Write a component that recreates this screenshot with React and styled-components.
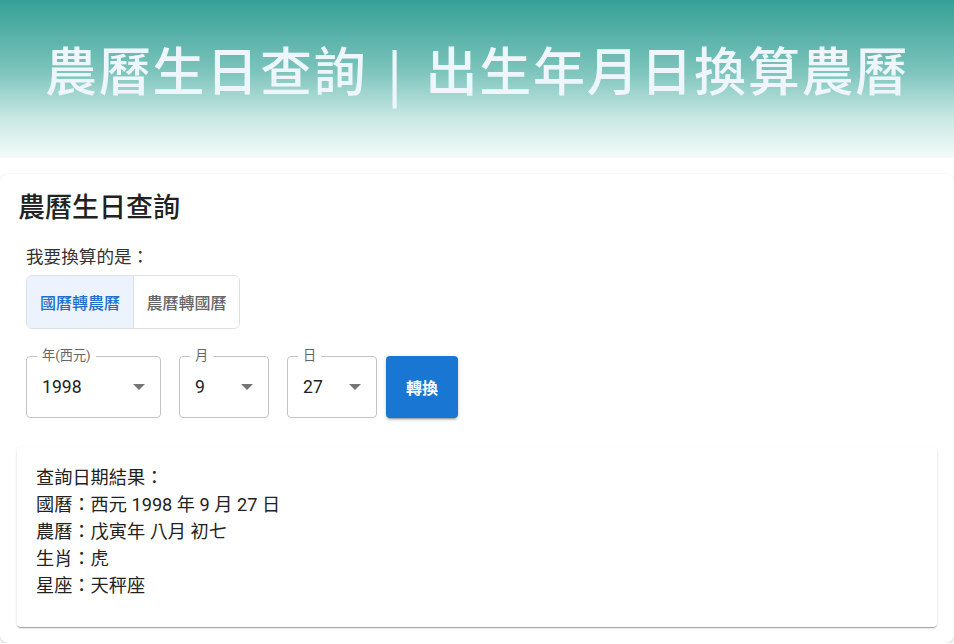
import React, { useState } from "react";
import styled, { createGlobalStyle } from "styled-components";

const Global = createGlobalStyle`
  html, body { margin: 0; padding: 0; background: #ffffff; }
  body {
    font-family: Roboto, "Noto Sans CJK TC", "Noto Sans", sans-serif;
    color: #222;
  }
  * { box-sizing: border-box; }
`;

const Header = styled.header`
  height: 158px;
  background: linear-gradient(to bottom, #35a096 0%, #7cc4bc 45%, #c9e8e4 75%, #f4fbfa 100%);
  display: flex;
  align-items: center;
  justify-content: center;
  padding-bottom: 20px;
`;

const HeaderTitle = styled.h1`
  margin: 0;
  font-family: "Noto Sans CJK TC", sans-serif;
  font-size: 52px;
  font-weight: 500;
  letter-spacing: 1.7px;
  color: #eef6fc;
  line-height: 1.2;
  white-space: pre;
`;

const Sep = styled.span`
  display: inline-block;
  padding: 0 22px 0 20px;
  font-family: "Noto Sans CJK TC", sans-serif;
  font-weight: 500;
  transform: translateY(3px);
`;

const Card = styled.main`
  margin-top: 16px;
  background: #fff;
  border-radius: 8px;
  box-shadow: 0 1px 3px rgba(0,0,0,0.18), 0 1px 1px rgba(0,0,0,0.06);
  padding: 12px 17px 16px;
`;

const Title = styled.h2`
  margin: 0 0 0 1px;
  font-size: 27px;
  font-weight: 500;
  line-height: 40px;
  color: #222;
  font-family: "Noto Sans CJK TC", sans-serif;
`;

const Form = styled.section`
  padding: 17px 9px 0;
  display: flex;
  flex-direction: column;
`;

const Prompt = styled.div`
  font-size: 17.6px;
  line-height: 26px;
  color: #333;
  font-family: "Noto Sans CJK TC", sans-serif;
`;

const ToggleGroup = styled.div`
  margin-top: 6px;
  display: inline-flex;
  align-self: flex-start;
  border: 1px solid #dcdfe4;
  border-radius: 6px;
  overflow: hidden;
  height: 54px;
`;

const ToggleButton = styled.button`
  width: ${(p) => p.$w}px;
  border: none;
  border-left: ${(p) => (p.$first ? "none" : "1px solid #dcdfe4")};
  background: ${(p) => (p.$active ? "#edf3fc" : "#fff")};
  color: ${(p) => (p.$active ? "#1f6fcb" : "#666")};
  font-family: "Noto Sans CJK TC", sans-serif;
  font-size: 16px;
  font-weight: 500;
  cursor: pointer;
  padding: 0;
`;

const FieldRow = styled.div`
  margin-top: 27px;
  display: flex;
  align-items: stretch;
  gap: 18px;
`;

const SelectBox = styled.div`
  position: relative;
  width: ${(p) => p.$w}px;
  height: 62px;
  border: 1px solid #c4c4c4;
  border-radius: 4px;
  display: flex;
  align-items: center;
  padding: 0 15px 0 15px;
  justify-content: space-between;
`;

const Legend = styled.span`
  position: absolute;
  top: -10px;
  left: 10px;
  padding: 0 5px;
  background: #fff;
  font-size: 13.2px;
  line-height: 18px;
  color: #666;
  font-family: Roboto, "Noto Sans CJK TC", sans-serif;
`;

const Value = styled.span`
  font-size: 17.6px;
  color: #222;
  font-family: Roboto, sans-serif;
`;

const Arrow = styled.span`
  width: 0;
  height: 0;
  border-left: 6px solid transparent;
  border-right: 6px solid transparent;
  border-top: 6px solid #757575;
`;

const ConvertButton = styled.button`
  margin-left: -9px;
  width: 72px;
  height: 62px;
  border: none;
  border-radius: 4px;
  background: #1976d2;
  color: #fff;
  font-family: "Noto Sans CJK TC", sans-serif;
  font-size: 16px;
  font-weight: 600;
  box-shadow: 0 3px 1px -2px rgba(0,0,0,0.2), 0 2px 2px 0 rgba(0,0,0,0.14), 0 1px 5px 0 rgba(0,0,0,0.12);
  cursor: pointer;
`;

const Result = styled.section`
  margin-top: 29px;
  background: #fff;
  border-radius: 4px;
  box-shadow: 0 2px 1px -1px rgba(0,0,0,0.2), 0 1px 1px 0 rgba(0,0,0,0.14), 0 1px 3px 0 rgba(0,0,0,0.12);
  padding: 17px 19px 28px;
`;

const ResultLine = styled.div`
  font-size: 18.2px;
  line-height: 27px;
  color: #222;
  font-family: Roboto, "Noto Sans CJK TC", sans-serif;
`;

function Select({ label, value, width }) {
  return (
    <SelectBox $w={width}>
      <Legend>{label}</Legend>
      <Value>{value}</Value>
      <Arrow />
    </SelectBox>
  );
}

export default function App() {
  const [mode, setMode] = useState(0);
  const lines = [
    "查詢日期結果：",
    "國曆：西元 1998 年 9 月 27 日",
    "農曆：戊寅年 八月 初七",
    "生肖：虎",
    "星座：天秤座",
  ];
  return (
    <>
      <Global />
      <Header>
        <HeaderTitle>
          農曆生日查詢<Sep>|</Sep>出生年月日換算農曆
        </HeaderTitle>
      </Header>
      <Card>
        <Title>農曆生日查詢</Title>
        <Form>
          <Prompt>我要換算的是：</Prompt>
          <ToggleGroup>
            <ToggleButton $w={106} $first $active={mode === 0} onClick={() => setMode(0)}>
              國曆轉農曆
            </ToggleButton>
            <ToggleButton $w={106} $active={mode === 1} onClick={() => setMode(1)}>
              農曆轉國曆
            </ToggleButton>
          </ToggleGroup>
          <FieldRow>
            <Select label="年(西元)" value="1998" width={135} />
            <Select label="月" value="9" width={90} />
            <Select label="日" value="27" width={90} />
            <ConvertButton>轉換</ConvertButton>
          </FieldRow>
        </Form>
        <Result>
          {lines.map((l) => (
            <ResultLine key={l}>{l}</ResultLine>
          ))}
        </Result>
      </Card>
    </>
  );
}
